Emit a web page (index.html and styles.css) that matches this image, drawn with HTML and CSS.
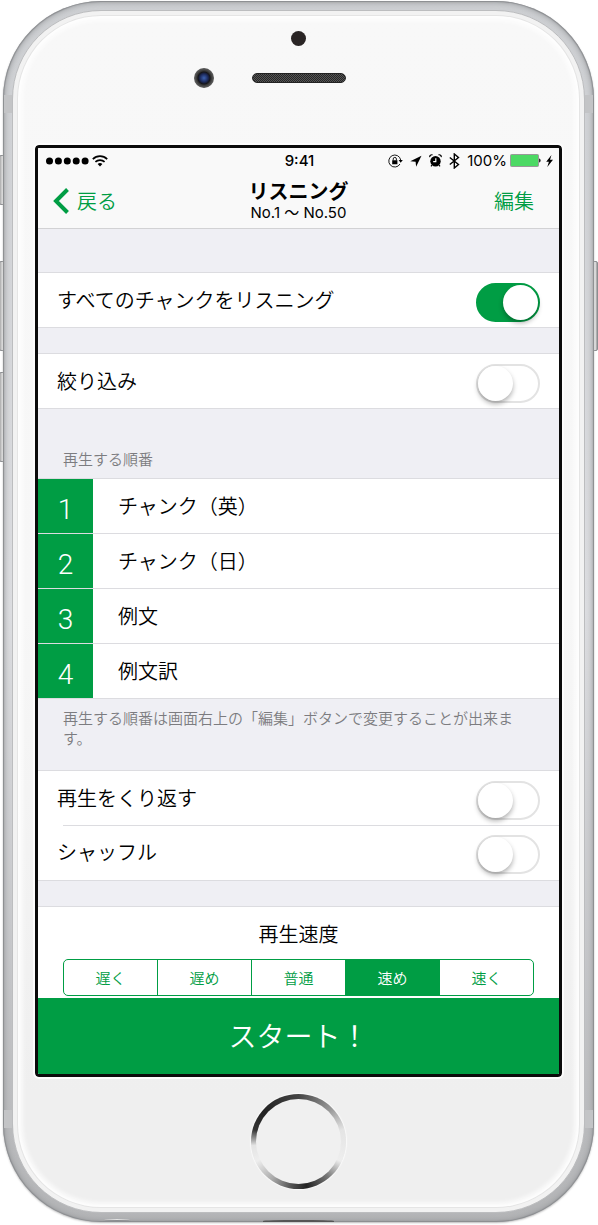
FILE: index.html
```
<!DOCTYPE html>
<html lang="ja">
<head>
<meta charset="UTF-8">
<meta name="viewport" content="width=device-width, initial-scale=1.0">
<title>リスニング</title>
<link rel="stylesheet" href="styles.css">
</head>
<body>
  <div class="phone">
    <span class="side-key mute"></span>
    <span class="side-key volume-up"></span>
    <span class="side-key volume-down"></span>
    <span class="side-key power"></span>
    <span class="antenna top"></span>
    <span class="antenna bottom"></span>
    <span class="jack"></span>
    <span class="port"></span>
    <div class="face">
      <div class="phone-top">
        <span class="sensor"></span>
        <div class="speaker-row">
          <span class="camera"></span>
          <span class="speaker"></span>
        </div>
      </div>

      <div class="screen">
        <!-- Status bar -->
        <div class="status-bar">
          <div class="status-left">
            <svg width="43" height="8" viewBox="0 0 43 8"><circle cx="3.5" cy="4" r="3.5"/><circle cx="12.4" cy="4" r="3.5"/><circle cx="21.3" cy="4" r="3.5"/><circle cx="30.2" cy="4" r="3.5"/><circle cx="39.1" cy="4" r="3.5"/></svg>
            <svg width="16" height="12" viewBox="0 0 16 12" fill="none" stroke="#000" stroke-width="1.7"><path d="M.8 4.1a10.3 10.3 0 0 1 14.4 0M3.4 6.9a6.6 6.6 0 0 1 9.2 0"/><path d="M8 11.6 5.6 9.1a3.6 3.6 0 0 1 4.8 0z" fill="#000" stroke="none"/></svg>
          </div>
          <span class="clock">9:41</span>
          <div class="status-right">
            <svg width="15" height="14" viewBox="0 0 15 14" fill="none" stroke="#000" stroke-width=".9"><path d="M12 10a6 6 0 1 1 .7-4"/><path d="M10.6 6h4.2l-2.1 2.8z" fill="#000" stroke="none"/><path d="M4.2 6.2h5.2v4H4.2z" fill="#000" stroke="none"/><path d="M5.2 6.4V5a1.6 1.6 0 0 1 3.2 0v1.4"/></svg>
            <svg width="12" height="12" viewBox="0 0 12 12"><path d="M11.5.8.3 6.3l5.3.4.5 5z"/></svg>
            <svg width="13" height="13" viewBox="0 0 13 13"><circle cx="6.5" cy="7.2" r="5.2"/><path d="M.8 3.2A2 2 0 0 1 3.5.9M12.2 3.2A2 2 0 0 0 9.5.9M3 11l-1 1.4M10 11l1 1.4" fill="none" stroke="#000" stroke-width="1.2"/><path d="M6.8 4.2v3.4H4.2" fill="none" stroke="#fff" stroke-width="1.2"/></svg>
            <svg width="11" height="16" viewBox="0 0 11 16" fill="none" stroke="#000" stroke-width="1.4"><path d="M.8 4.5 9.5 11.5 5.3 15V1l4.2 3.5L.8 11.5"/></svg>
            <span class="percent">100%</span>
            <svg class="battery-icon" width="31" height="13" viewBox="0 0 31 13"><rect x=".5" y=".5" width="28" height="12" rx="1" fill="#4cd964" stroke="#999"/><path d="M29.2 4.5c1.8.5 1.8 3.5 0 4z"/></svg>
            <svg width="7" height="12" viewBox="0 0 7 12"><path d="M5.5 0 .2 6.8h2.7L1.3 12 7 4.8H4z"/></svg>
          </div>
        </div>

        <!-- Navigation bar -->
        <header class="nav-bar">
          <a class="back" href="#">
            <svg width="16" height="26" viewBox="0 0 16 26" fill="none" stroke="#009d44" stroke-width="4"><path d="M14.5 1.5 3 13l11.5 11.5"/></svg>
            戻る
          </a>
          <div class="nav-title">
            <h1>リスニング</h1>
            <p>No.1 〜 No.50</p>
          </div>
          <a class="edit" href="#">編集</a>
        </header>

        <main class="settings">
          <div class="group">
            <label class="row">すべてのチャンクをリスニング <input class="switch" type="checkbox" checked></label>
          </div>
          <div class="group">
            <label class="row">絞り込み <input class="switch" type="checkbox"></label>
          </div>

          <h2>再生する順番</h2>
          <ol class="order-list">
            <li><span class="number">1</span>チャンク（英）</li>
            <li><span class="number">2</span>チャンク（日）</li>
            <li><span class="number">3</span>例文</li>
            <li><span class="number">4</span>例文訳</li>
          </ol>
          <p class="note">再生する順番は画面右上の「編集」ボタンで変更することが出来ます。</p>

          <div class="group">
            <label class="row">再生をくり返す <input class="switch" type="checkbox"></label>
            <label class="row">シャッフル <input class="switch" type="checkbox"></label>
          </div>

          <fieldset class="speed">
            <legend>再生速度</legend>
            <div class="segments">
              <label><input type="radio" name="speed">遅く</label>
              <label><input type="radio" name="speed">遅め</label>
              <label><input type="radio" name="speed">普通</label>
              <label><input type="radio" name="speed" checked>速め</label>
              <label><input type="radio" name="speed">速く</label>
            </div>
          </fieldset>
        </main>
        <button class="start" type="button">スタート！</button>
      </div>

      <div class="phone-bottom">
        <span class="home"></span>
      </div>
    </div>
  </div>
</body>
</html>
```
FILE: styles.css
```
* {
  box-sizing: border-box;
}
body {
  margin: 0;
  padding: 1px 4px 3px 3px;
  background-color: #fff;
  color: #000;
  font-family: "Noto Sans CJK JP", sans-serif;
  font-size: 20px;
  font-weight: 350;
}
h1, h2, p {
  margin: 0;
}
a {
  color: #009d44;
  text-decoration: none;
}

/* Phone body */
.phone {
  position: relative;
  padding: 9px;
  border-radius: 98px;
  background: linear-gradient(#cdcfd2, #dcdde0 50%, #b4b5b7);
  box-shadow: inset 0 0 1px 1px #8b8d90, inset 0 0 6px 1px #96989b, 0 1px 2px #bbb;
}
.face {
  padding: 0 22px;
  border: 1px solid #bcbdbf;
  border-radius: 89px;
  background: linear-gradient(#f8f8f8, #f7f7f7 50%, #efefef 90%);
  box-shadow: inset 0 0 0 4px #f2f2f2, inset 0 0 0 5px #e5e5e5, inset 0 0 5px 9px #fefefe;
}
.side-key {
  position: absolute;
  z-index: -1;
  left: -4px;
  width: 7px;
  height: 90px;
  border: 1px solid #8b8d90;
  border-radius: 2px;
  background: linear-gradient(90deg, #aaa, #eee 60%, #999);
}
.mute {
  top: 154px;
  height: 50px;
}
.volume-up {
  top: 260px;
}
.volume-down {
  top: 371px;
}
.power {
  top: 260px;
  right: -4px;
  left: auto;
}
.antenna {
  position: absolute;
  right: 1px;
  left: 1px;
  height: 18px;
  border: solid #c3c4c6;
  border-width: 0 8px;
}
.antenna.top {
  top: 94px;
}
.antenna.bottom {
  bottom: 94px;
}
.jack,
.port {
  position: absolute;
  bottom: 0;
  left: 17%;
  width: 28px;
  height: 3px;
  border-top: 1px solid #e4e4e4;
  border-radius: 50% 50% 0 0;
  background-color: #8b8d90;
}
.port {
  left: 44%;
  width: 12%;
  height: 2px;
  border: 0;
  background-color: #555;
}
.phone-top {
  display: flex;
  flex-direction: column;
  align-items: center;
  gap: 22px;
  height: 134px;
  padding-top: 20px;
}
.sensor {
  width: 15px;
  height: 15px;
  border-radius: 50%;
  background-color: #2a2525;
}
.speaker-row {
  display: grid;
  grid-template-columns: 1fr 94px 1fr;
  align-items: center;
  column-gap: 38px;
  width: 100%;
}
.camera {
  justify-self: end;
  width: 20px;
  height: 20px;
  border-radius: 50%;
  background: radial-gradient(circle, #3d62b0 0, #1c2a5c 4px, #151519 6px, #333 7px, #555 9px);
}
.speaker {
  height: 10px;
  border: 1px solid #222;
  border-radius: 5px;
  background: repeating-conic-gradient(#262626 0 25%, #555 0 50%) 0 0 / 2px 2px;
}
.phone-bottom {
  display: flex;
  justify-content: center;
  height: 135px;
  padding-top: 17px;
}
.home {
  width: 95px;
  height: 95px;
  border: 5px solid transparent;
  border-radius: 50%;
  background:
    linear-gradient(#f0f0f0, #f0f0f0) padding-box,
    conic-gradient(#444 0, #999 45deg, #e4e4e4 75deg, #eee 115deg, #777 140deg, #222 170deg, #555 190deg, #aaa 215deg, #eee 245deg, #e4e4e4 265deg, #333 285deg, #222 310deg, #444 360deg) border-box;
  box-shadow: 0 0 1px 1px #fafafa;
}

/* Screen */
.screen {
  overflow: hidden;
  border: 3px solid #0b0b0b;
  border-radius: 4px;
  background-color: #efeff4;
  outline: 2px solid #fdfdfd;
}
.status-bar {
  display: grid;
  grid-template-columns: 1fr auto 1fr;
  align-items: center;
  height: 25px;
  padding: 0 6px 0 8px;
  background-color: #f9f9f9;
  font-family: Inter, sans-serif;
  font-size: 15px;
  font-weight: 400;
}
.status-left,
.status-right {
  display: flex;
  align-items: center;
  gap: 3px;
}
.status-right {
  justify-content: flex-end;
  gap: 7px;
}
.clock {
  font-weight: 500;
}
.percent {
  font-size: 15px;
}
.battery-icon {
  margin: 0 -2px 0 -4px;
}
.nav-bar {
  display: grid;
  grid-template-columns: 1fr auto 1fr;
  align-items: center;
  height: 56px;
  padding: 0 15px;
  border-bottom: 1px solid #d2d2d4;
  background-color: #f9f9f9;
}
.back {
  display: flex;
  align-items: center;
  gap: 8px;
}
.edit {
  justify-self: end;
  padding-right: 10px;
}
.nav-title {
  text-align: center;
}
.nav-title h1 {
  font-size: 20px;
  font-weight: 700;
  line-height: 24px;
}
.nav-title p {
  font-family: Inter, "Noto Sans CJK JP", sans-serif;
  font-size: 15px;
  font-weight: 400;
  line-height: 20px;
}

/* Settings list */
.settings {
  padding-top: 43px;
}
.group {
  margin-bottom: 25px;
  border: solid #dcdce0;
  border-width: 1px 0;
  background-color: #fff;
}
.row {
  display: flex;
  align-items: center;
  justify-content: space-between;
  height: 54px;
  padding: 0 19px 2px;
}
.row + .row {
  height: 55px;
  background: linear-gradient(#dcdce0, #dcdce0) 25px 0 / 100% 1px no-repeat;
}
.switch {
  appearance: none;
  width: 64px;
  height: 39px;
  margin: 6px 0 0;
  padding: 0;
  border: 2px solid #e3e3e3;
  border-radius: 20px;
  background-color: #fff;
}
.switch::before {
  content: "";
  display: block;
  width: 35px;
  height: 35px;
  border-radius: 50%;
  background-color: #fff;
  box-shadow: 0 3px 5px rgba(0, 0, 0, 0.3);
}
.switch:checked {
  border-color: #009d44;
  background-color: #009d44;
}
.switch:checked::before {
  margin-left: auto;
}
h2,
.note {
  color: #7c7c80;
  font-size: 15px;
  font-weight: 350;
  line-height: 20px;
}
h2 {
  padding: 15px 25px 9px;
}
.order-list {
  margin: 0;
  padding: 0;
  border-bottom: 1px solid #dcdce0;
  background-color: #fff;
  list-style: none;
}
.order-list li {
  display: flex;
  gap: 25px;
  height: 55px;
  border-top: 1px solid #dcdce0;
  line-height: 53px;
}
.number {
  width: 55px;
  padding-top: 4px;
  background-color: #009d44;
  color: #fff;
  font-family: Roboto, sans-serif;
  font-size: 28px;
  font-weight: 300;
  text-align: center;
}
.note {
  padding: 9px 35px 22px 25px;
}
.speed {
  margin: 0;
  padding: 12px 25px 2px;
  border: 0;
  border-top: 1px solid #dcdce0;
  background-color: #fff;
}
.speed legend {
  float: left;
  width: 100%;
  padding: 0 0 10px;
  line-height: 30px;
  text-align: center;
}
.segments {
  display: flex;
  clear: both;
  height: 37px;
  overflow: hidden;
  border: 1px solid #009d44;
  border-radius: 5px;
  color: #009d44;
  font-size: 15px;
  line-height: 35px;
  text-align: center;
}
.segments label {
  flex: 1;
}
.segments label + label {
  border-left: 1px solid #009d44;
}
.segments input {
  appearance: none;
  position: absolute;
  margin: 0;
}
.segments label:has(:checked) {
  background-color: #009d44;
  color: #fff;
}
.start {
  display: block;
  width: 100%;
  height: 76px;
  padding: 0 0 2px;
  border: 0;
  background-color: #009d44;
  color: #fff;
  font: inherit;
  font-size: 28px;
}
```
